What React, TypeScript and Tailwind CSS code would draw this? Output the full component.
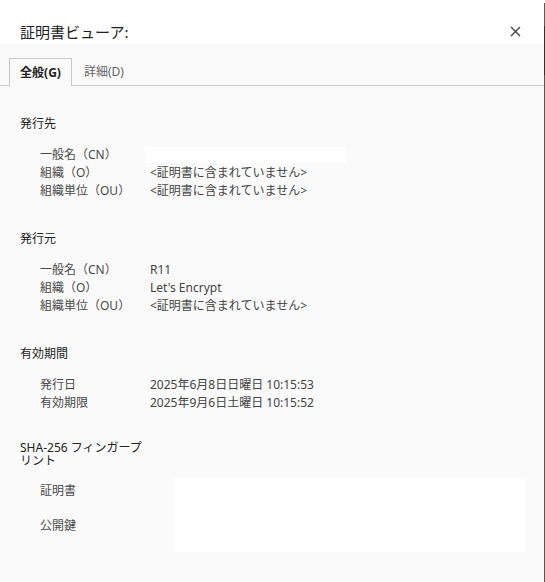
import React from "react";

type Row = { label: string; value: string; blank?: boolean };

function Section({ title, rows, first }: { title: string; rows: Row[]; first?: boolean }) {
  return (
    <div className={first ? "" : "mt-[30px]"}>
      <div className="text-[12px] leading-[18px] text-[#222]">{title}</div>
      <div className="mt-[13px] pl-5 flex flex-col">
        {rows.map((r) => (
          <div key={r.label} className="flex h-[18px] items-center text-[12px] leading-[18px]">
            <div className="w-[110px] shrink-0 text-[#4a4a4a]">{r.label}</div>
            {r.blank ? (
              <div className="-ml-[5px] h-[16px] w-[201px] bg-white" />
            ) : (
              <div className="text-[#444]">{r.value}</div>
            )}
          </div>
        ))}
      </div>
    </div>
  );
}

export default function App() {
  const none = "<証明書に含まれていません>";
  return (
    <div className="flex h-[582px] w-[545px] font-['Noto_Sans','Noto_Sans_CJK_JP',sans-serif] bg-[#fafafa]">
      <div className="flex flex-1 flex-col">
        <div className="flex h-[44px] items-start justify-between bg-white pl-5 pr-[23px] pt-[23px]">
          <div className="text-[15px] leading-[18px] text-[#222]">証明書ビューア:</div>
          <svg width="11" height="11" viewBox="0 0 11 11" className="mt-[3px]">
            <path d="M1 1L10 10M10 1L1 10" stroke="#444" strokeWidth="1.4" />
          </svg>
        </div>
        <div className="pt-[14px]">
          <div className="flex h-[28px] items-stretch border-b border-[#c9c9c9] pl-[9px]">
            <div className="-mb-px flex h-[28px] w-[63px] items-center justify-center border border-b-0 border-[#c9c9c9] bg-[#fafafa] text-[12px] font-bold text-[#222]">
              全般(G)
            </div>
            <div className="flex items-center pl-[12px] text-[12px] text-[#666]">詳細(D)</div>
          </div>
        </div>
        <div className="flex flex-col pl-5 pt-[29px]">
          <Section
            first
            title="発行先"
            rows={[
              { label: "一般名（CN）", value: "", blank: true },
              { label: "組織（O）", value: none },
              { label: "組織単位（OU）", value: none },
            ]}
          />
          <Section
            title="発行元"
            rows={[
              { label: "一般名（CN）", value: "R11" },
              { label: "組織（O）", value: "Let's Encrypt" },
              { label: "組織単位（OU）", value: none },
            ]}
          />
          <Section
            title="有効期間"
            rows={[
              { label: "発行日", value: "2025年6月8日日曜日 10:15:53" },
              { label: "有効期限", value: "2025年9月6日土曜日 10:15:52" },
            ]}
          />
          <div className="mt-[29px]">
            <div className="w-[130px] text-[12px] leading-[13px] text-[#222]">SHA-256 フィンガープリント</div>
            <div className="mt-[11px] flex">
              <div className="flex w-[153px] shrink-0 flex-col gap-[17px] pl-5 pt-[4px] text-[12px] leading-[18px] text-[#4a4a4a]">
                <div>証明書</div>
                <div>公開鍵</div>
              </div>
              <div className="h-[74px] w-[353px] bg-white" />
            </div>
          </div>
        </div>
      </div>
      <div className="flex w-px flex-col">
        <div className="h-[3px] bg-white" />
        <div className="h-[23px] bg-[#5a5a5a]" />
        <div className="h-[49px] bg-[#1e3b2a]" />
        <div className="flex-1 bg-[#555]" />
      </div>
    </div>
  );
}
